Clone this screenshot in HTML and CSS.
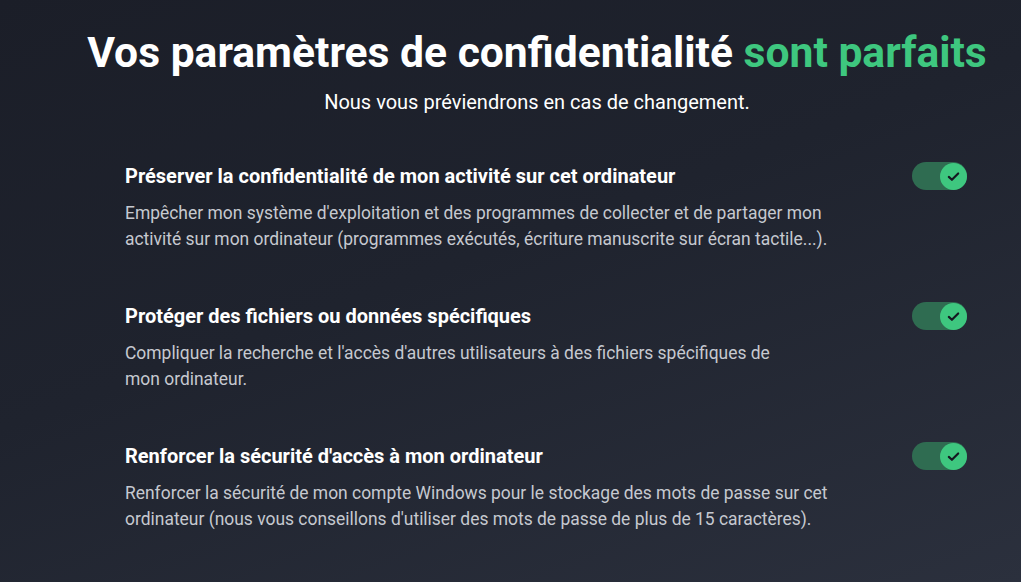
FILE: index.html
```html
<!DOCTYPE html>
<html lang="fr">
<head>
<meta charset="utf-8">
<link rel="stylesheet" href="styles.css">
</head>
<body>
<main class="page">
  <header class="hero">
    <h1 class="title">Vos paramètres de confidentialité <span class="accent">sont parfaits</span></h1>
    <p class="subtitle">Nous vous préviendrons en cas de changement.</p>
  </header>
  <section class="list">
    <div class="item">
      <div class="item-text">
        <h2 class="item-title">Préserver la confidentialité de mon activité sur cet ordinateur</h2>
        <p class="item-desc">Empêcher mon système d'exploitation et des programmes de collecter et de partager mon<br>activité sur mon ordinateur (programmes exécutés, écriture manuscrite sur écran tactile...).</p>
      </div>
      <span class="toggle"><span class="knob"><svg viewBox="0 0 16 16" width="15" height="15"><path d="M3 8.4l3.3 3.1L13 4.7" fill="none" stroke="#151821" stroke-width="2.3" stroke-linecap="round" stroke-linejoin="round"/></svg></span></span>
    </div>
    <div class="item">
      <div class="item-text">
        <h2 class="item-title">Protéger des fichiers ou données spécifiques</h2>
        <p class="item-desc">Compliquer la recherche et l'accès d'autres utilisateurs à des fichiers spécifiques de<br>mon ordinateur.</p>
      </div>
      <span class="toggle"><span class="knob"><svg viewBox="0 0 16 16" width="15" height="15"><path d="M3 8.4l3.3 3.1L13 4.7" fill="none" stroke="#151821" stroke-width="2.3" stroke-linecap="round" stroke-linejoin="round"/></svg></span></span>
    </div>
    <div class="item">
      <div class="item-text">
        <h2 class="item-title">Renforcer la sécurité d'accès à mon ordinateur</h2>
        <p class="item-desc">Renforcer la sécurité de mon compte Windows pour le stockage des mots de passe sur cet<br>ordinateur (nous vous conseillons d'utiliser des mots de passe de plus de 15 caractères).</p>
      </div>
      <span class="toggle"><span class="knob"><svg viewBox="0 0 16 16" width="15" height="15"><path d="M3 8.4l3.3 3.1L13 4.7" fill="none" stroke="#151821" stroke-width="2.3" stroke-linecap="round" stroke-linejoin="round"/></svg></span></span>
    </div>
  </section>
</main>
</body>
</html>
```
FILE: styles.css
```css
html, body {
  margin: 0;
  height: 100%;
}
body {
  background: linear-gradient(160deg, #1b1e28 0%, #1f232e 45%, #2b303d 100%);
  font-family: Roboto, "Liberation Sans", sans-serif;
  color: #ffffff;
  overflow: hidden;
}
.page {
  width: 900px;
  margin-left: 87px;
  padding-top: 27px;
}
.hero {
  text-align: center;
}
.title {
  margin: 0;
  font-size: 42.6px;
  font-weight: 700;
  line-height: 50px;
  white-space: nowrap;
}
.accent {
  color: #3ec77f;
}
.subtitle {
  margin: 13px 0 0;
  font-size: 20px;
  line-height: 24px;
}
.list {
  margin-top: 50px;
  padding-left: 38px;
  padding-right: 20px;
  display: flex;
  flex-direction: column;
  gap: 52px;
}
.item {
  display: flex;
  align-items: flex-start;
  justify-content: space-between;
}
.item-text {
  width: 740px;
}
.item-title {
  margin: 0;
  font-size: 20px;
  font-weight: 700;
  line-height: 24px;
}
.item-desc {
  margin: 12px 0 0;
  font-size: 17.45px;
  line-height: 26px;
  color: #c6c9d0;
  white-space: nowrap;
}
.toggle {
  margin-top: -2px;
  width: 55px;
  height: 28px;
  border-radius: 14px;
  background: #2f6c51;
  display: flex;
  align-items: center;
  justify-content: flex-end;
  padding: 0.5px;
  box-sizing: border-box;
}
.knob {
  width: 27px;
  height: 27px;
  border-radius: 50%;
  background: #3ec77f;
  display: flex;
  align-items: center;
  justify-content: center;
}
```
